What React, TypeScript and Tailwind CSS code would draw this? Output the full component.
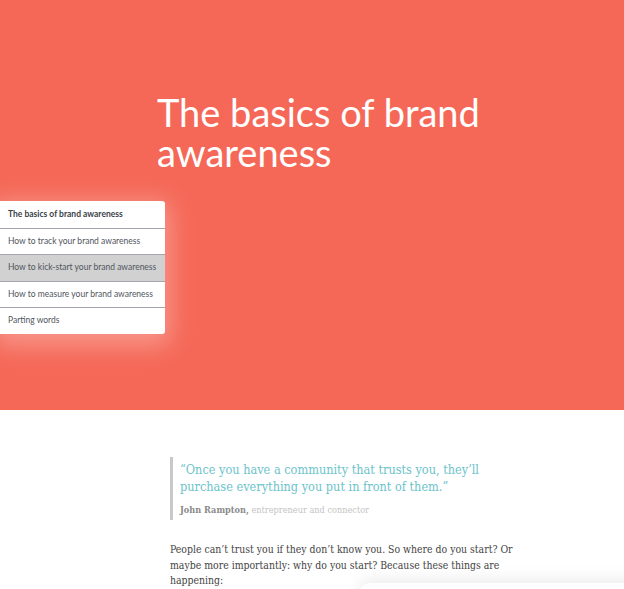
const sections = [
  "The basics of brand awareness",
  "How to track your brand awareness",
  "How to kick-start your brand awareness",
  "How to measure your brand awareness",
  "Parting words",
];

const serif = "font-['DejaVu_Serif_Condensed','DejaVu_Serif',serif]";

export default function App() {
  return (
    <div className="relative h-[589px] w-[624px] overflow-hidden bg-white">
      <header className="h-[410px] bg-[#f56857] pt-[92px]">
        <h1 className="ml-[157px] w-[340px] font-['Lato',sans-serif] text-[38px] leading-[40px] font-normal text-white">
          The basics of brand awareness
        </h1>

        <nav className="mt-[29px] w-[165px] overflow-hidden rounded-r-[3px] bg-white font-['Lato',sans-serif] shadow-[0_6px_24px_6px_rgba(255,255,255,0.3)]">
          {sections.map((s, i) => (
            <div
              key={s}
              className={`flex h-[26.5px] items-center px-2 text-[8.5px] whitespace-nowrap ${
                i > 0 ? "border-t border-[#a3a6ad]" : ""
              } ${i === 2 ? "bg-[#d1d1d1]" : ""} ${
                i === 0 ? "font-bold text-[#3a3f48]" : "text-[#50555d]"
              }`}
            >
              {s}
            </div>
          ))}
        </nav>
      </header>

      <main className={`ml-[170px] w-[354px] pt-[47px] ${serif}`}>
        <blockquote className="border-l-[3px] border-[#c8c8c8] pt-[4px] pb-[3px] pl-[7px]">
          <p className="text-[12.6px] leading-[17px] text-[#6cc3cb]">
            “Once you have a community that trusts you, they’ll purchase everything you put in front of them.”
          </p>
          <p className="mt-[8px] text-[9.1px] leading-[14px]">
            <span className="font-bold text-[#8a8a8a]">John Rampton,</span>{" "}
            <span className="text-[#c4c4c4]">entrepreneur and connector</span>
          </p>
        </blockquote>

        <p className="mt-[22px] text-[10.4px] leading-[15.5px] text-[#444]">
          People can’t trust you if they don’t know you. So where do you start? Or maybe more importantly: why do you start? Because these things are happening:
        </p>
      </main>

      <div className="pointer-events-none absolute top-[583px] left-[360px] h-[40px] w-[300px] rounded-[10px] bg-white shadow-[0_-4px_16px_rgba(0,0,0,0.08)]" />
    </div>
  );
}
